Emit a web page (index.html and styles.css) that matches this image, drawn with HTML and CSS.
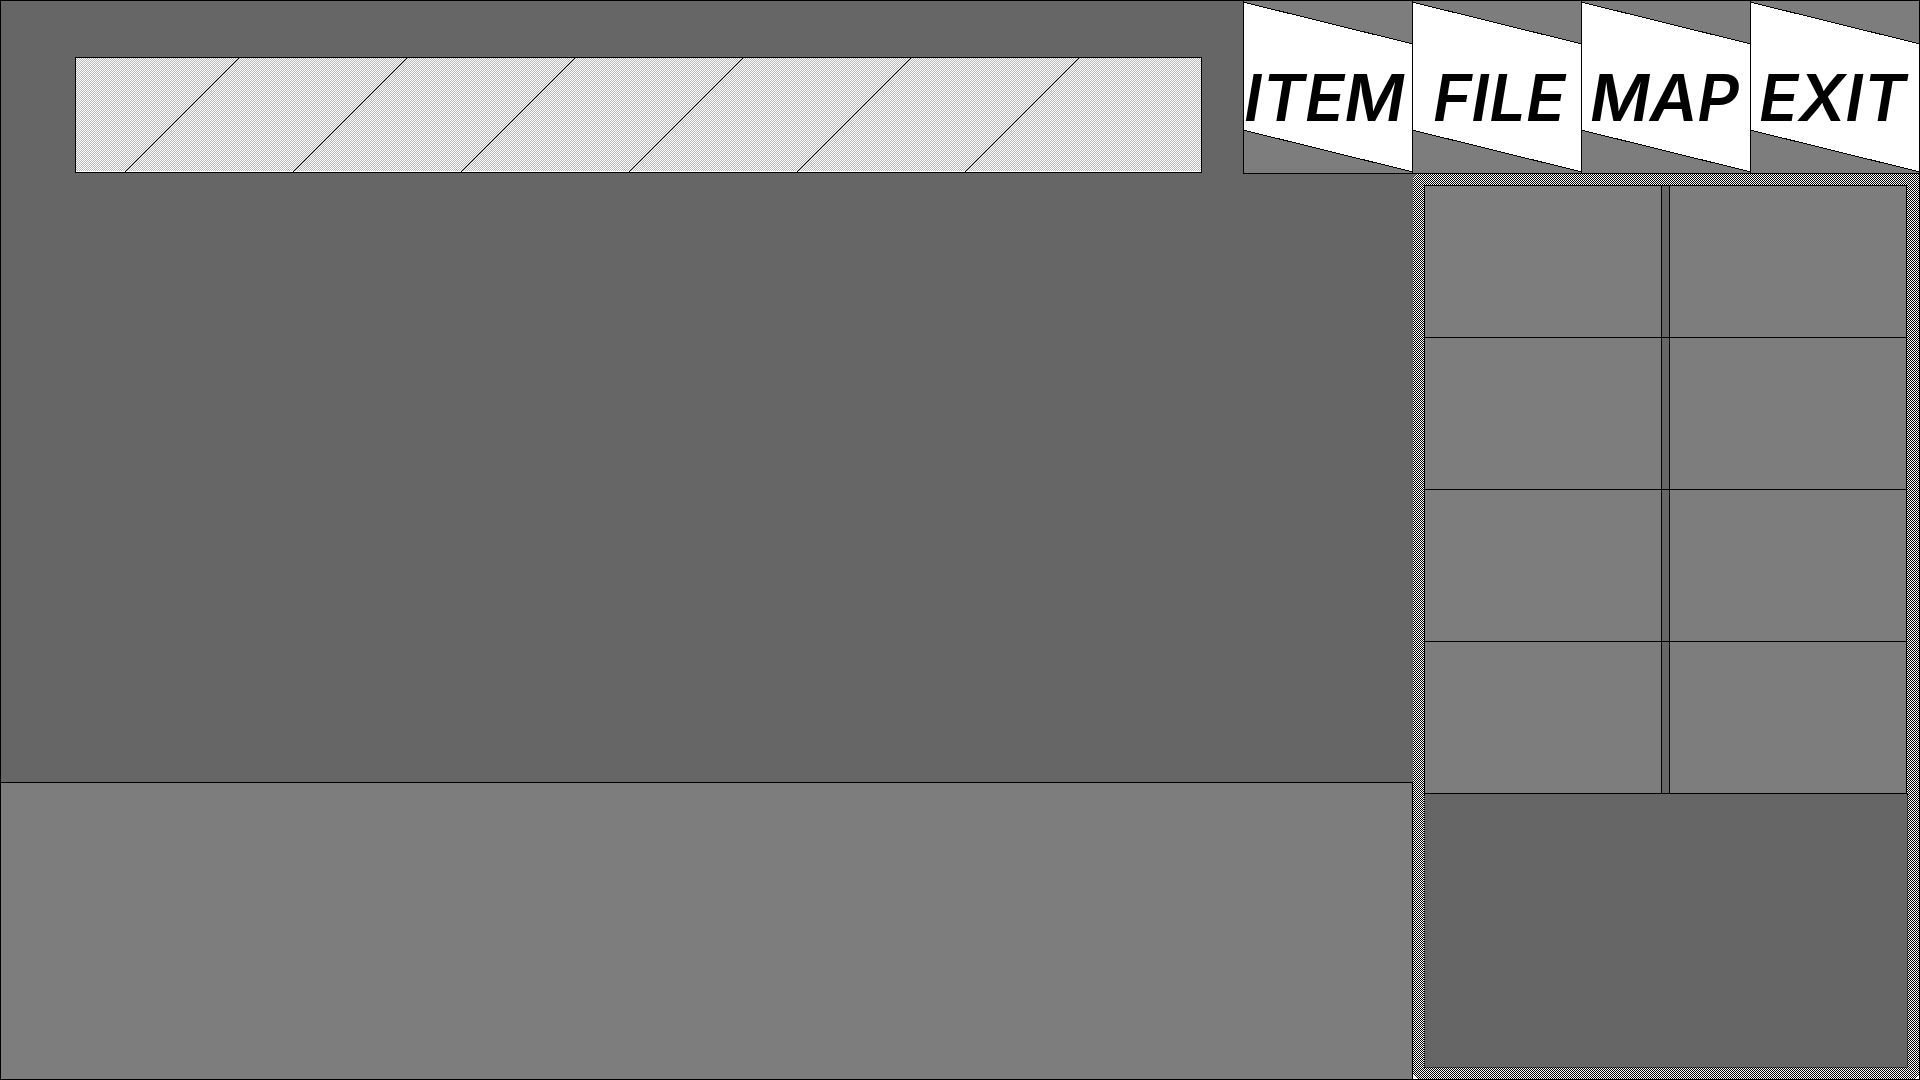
FILE: index.html
```html
<!DOCTYPE html>
<html lang="en">
<head>
<meta charset="utf-8">
<meta name="viewport" content="width=device-width, initial-scale=1">
<title>Inventory</title>
<link rel="stylesheet" href="styles.css">
</head>
<body>
<div class="screen">
  <main class="scene">
    <div class="gauge">
      <svg class="gauge-lines" viewBox="0 0 1125 114" preserveAspectRatio="none" aria-hidden="true">
        <path d="M49 114L163 0M217 114L331 0M385 114L499 0M553 114L667 0M721 114L835 0M889 114L1003 0"/>
      </svg>
    </div>
  </main>
  <nav class="menu">
    <button class="tab tab-item" type="button"><svg class="tab-shape" viewBox="0 0 168 172" preserveAspectRatio="none" aria-hidden="true"><path d="M-1 1L169 43V171L-1 129Z"/></svg><span class="tab-label">ITEM</span></button>
    <button class="tab tab-file" type="button"><svg class="tab-shape" viewBox="0 0 168 172" preserveAspectRatio="none" aria-hidden="true"><path d="M-1 1L169 43V171L-1 129Z"/></svg><span class="tab-label">FILE</span></button>
    <button class="tab tab-map" type="button"><svg class="tab-shape" viewBox="0 0 168 172" preserveAspectRatio="none" aria-hidden="true"><path d="M-1 1L169 43V171L-1 129Z"/></svg><span class="tab-label">MAP</span></button>
    <button class="tab tab-exit" type="button"><svg class="tab-shape" viewBox="0 0 168 172" preserveAspectRatio="none" aria-hidden="true"><path d="M-1 1L169 43V171L-1 129Z"/></svg><span class="tab-label">EXIT</span></button>
  </nav>
  <section class="message"></section>
  <aside class="inventory">
    <div class="slots">
      <div class="slot-row"><div class="slot"></div><div class="divider"></div><div class="slot"></div></div>
      <div class="slot-row"><div class="slot"></div><div class="divider"></div><div class="slot"></div></div>
      <div class="slot-row"><div class="slot"></div><div class="divider"></div><div class="slot"></div></div>
      <div class="slot-row"><div class="slot"></div><div class="divider"></div><div class="slot"></div></div>
    </div>
    <div class="details"></div>
  </aside>
</div>
</body>
</html>
```
FILE: styles.css
```css
* {
  box-sizing: border-box;
}

body {
  margin: 0;
  background: #666;
  font-family: Inter, "Liberation Sans", sans-serif;
}

.screen {
  display: grid;
  grid-template-columns: 1243fr 170fr 507fr;
  grid-template-rows: 174fr 608fr 298fr;
  min-height: 100vh;
}

.scene {
  grid-area: 1 / 1 / 3 / 3;
  display: grid;
  grid-template-columns: 74fr 1127fr 211fr;
  grid-template-rows: 56fr 116fr 609fr;
  background: #666;
  border: solid #000;
  border-width: 1px 0 0 1px;
}

.gauge {
  grid-area: 2 / 2;
  display: grid;
  min-height: 0;
  border: 1px solid #000;
  background: conic-gradient(#b9b9b9 25%, #fff 0 50%, #b9b9b9 0 75%, #fff 0) 0 0 / 2px 2px;
  box-shadow: inset 0 -1px #fff;
}

.gauge-lines {
  width: 100%;
  height: 100%;
  min-height: 0;
  fill: none;
  stroke: #000;
  shape-rendering: crispEdges;
}

.menu {
  grid-area: 1 / 2 / 2 / 4;
  display: grid;
  grid-template-columns: repeat(4, 1fr);
  border: solid #000;
  border-width: 1px 1px 1px 0;
}

.tab {
  display: grid;
  grid-template: minmax(0, 1fr) / minmax(0, 1fr);
  align-items: center;
  min-width: 0;
  padding: 0;
  border: 0;
  border-left: 1px solid #000;
  border-radius: 0;
  background: #7d7d7d;
  color: #000;
  font: italic 600 65px/80px Inter, "Liberation Sans", sans-serif;
  text-align: left;
  cursor: pointer;
}

.tab-shape {
  grid-area: 1 / 1;
  width: 100%;
  height: 100%;
  min-height: 0;
  fill: #fff;
  stroke: #000;
  shape-rendering: crispEdges;
}

.tab-label {
  grid-area: 1 / 1;
  padding-top: 22px;
  white-space: nowrap;
}

.tab-file .tab-label {
  padding-left: 20px;
}

.tab-map .tab-label,
.tab-exit .tab-label {
  padding-left: 8px;
}

.message {
  grid-area: 3 / 1 / 4 / 3;
  background: #7d7d7d;
  border: 1px solid #000;
}

.inventory {
  grid-area: 2 / 3 / 4 / 4;
  display: grid;
  grid-template-rows: 609fr 274fr;
  padding: 11px;
  border: solid #000;
  border-width: 0 1px 1px 0;
  background:
    linear-gradient(135deg, #666 3px, transparent 0) 0 0 / 6px 6px no-repeat,
    linear-gradient(45deg, #fff 3px, transparent 0) 0 100% / 6px 6px no-repeat,
    linear-gradient(315deg, #fff 3px, transparent 0) 100% 100% / 6px 6px no-repeat,
    conic-gradient(#000 25%, #fff 0 50%, #000 0 75%, #fff 0) 0 0 / 2px 2px;
}

.slots {
  display: grid;
  grid-template-rows: repeat(4, 1fr);
  border-bottom: 1px solid #000;
}

.slot-row {
  display: grid;
  grid-template-columns: 1fr 7px 1fr;
  padding-right: 1px;
  border-top: 1px solid #000;
}

.slot {
  background: #7d7d7d;
  border: solid #000;
  border-width: 0 1px;
}

.divider {
  background: #666;
}

.details {
  background: #666;
  border: 1px dotted #000;
  border-top: 0;
}
```
